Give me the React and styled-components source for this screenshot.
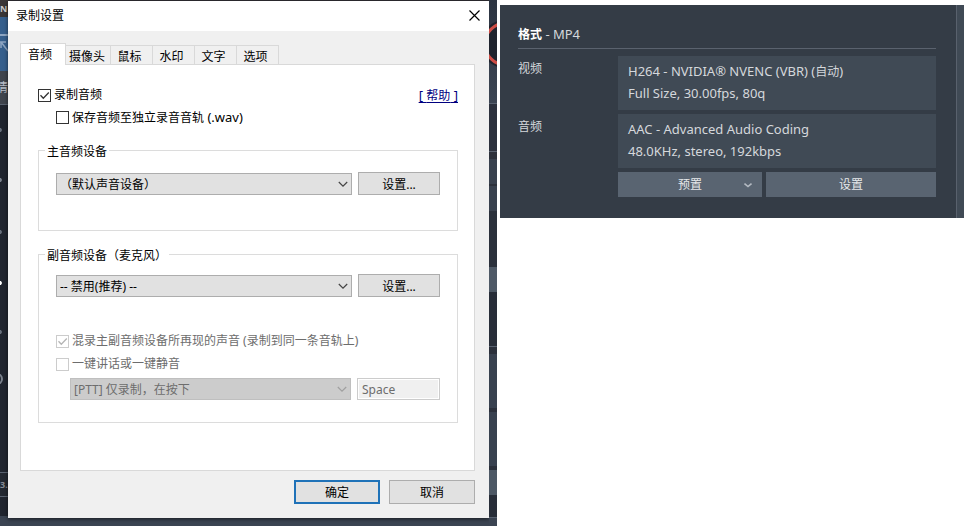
import styled, { createGlobalStyle, css } from "styled-components";

const GlobalStyle = createGlobalStyle`
  * {
    box-sizing: border-box;
  }

  body {
    margin: 0;
    background-color: #fff;
    font-family: "Noto Sans", "Noto Sans CJK SC", sans-serif;
    font-size: 12px;
    line-height: 16px;
  }

  button, input, select {
    font: inherit;
    margin: 0;
  }
`;

const Page = styled.main`
  display: grid;
  grid-template-columns: 497fr 464fr;
  column-gap: 3px;
  align-items: start;
`;

const Latin = styled.span`
  font-size: 13px;
`;

/* recorder window behind the dialog */

const Backdrop = styled.div`
  display: grid;
  grid-template-columns: 8px 1fr 8px;
  background: linear-gradient(#302d32, #3b4452 8px);
`;

const Edge = styled.div`
  display: flex;
  flex-direction: column;
  overflow: hidden;
`;

const Block = styled.div`
  display: flex;
  flex: ${({ $fill }) => ($fill ? "1" : "none")};
  align-items: center;
  justify-content: ${({ $end }) => ($end ? "flex-end" : "flex-start")};
  height: ${({ $h }) => $h}px;
  overflow: hidden;
  background: ${({ $bg }) => $bg};
  border-top: ${({ $line }) => ($line ? "1px solid #596270" : "none")};
  color: ${({ $color }) => $color || "#9aa2ae"};
`;

const EdgeMark = styled.span`
  font-size: 9px;
  font-weight: bold;
  line-height: 12px;
`;

const Dialog = styled.section`
  margin: 1px 0 8px;
  background-color: #f0f0f0;
  color: #000;
  box-shadow: 0 1px 4px rgba(0, 0, 0, 0.6);
`;

const TitleBar = styled.header`
  display: flex;
  align-items: center;
  justify-content: space-between;
  height: 30px;
  padding: 0 8px;
  background-color: #fff;
`;

const Title = styled.h1`
  margin: 0;
  font-size: 12px;
  font-weight: normal;
`;

const CloseButton = styled.button`
  display: flex;
  padding: 1px 1px 3px;
  border: none;
  background: none;
`;

const DialogBody = styled.div`
  padding: 12px 14px 14px 12px;
`;

const Tabs = styled.div`
  display: flex;
  align-items: flex-end;
  height: 21px;
`;

const Tab = styled.button`
  width: 42px;
  height: 19px;
  padding: 3px 4px 0 0;
  border: 1px solid #d9d9d9;
  border-left: none;
  border-bottom: none;
  background-color: #f0f0f0;
  color: #000;
  white-space: nowrap;

  ${({ $wide }) => $wide && css`
    width: 45px;
    padding-right: 2px;
  `}

  ${({ $active }) => $active && css`
    position: relative;
    width: 46px;
    height: 22px;
    margin-bottom: -1px;
    padding: 0 6px 0 0;
    border-left: 1px solid #d9d9d9;
    background-color: #fff;
  `}
`;

const TabPanel = styled.div`
  padding: 22px 16px 47px 17px;
  border: 1px solid #d9d9d9;
  background-color: #fff;
`;

const TopRow = styled.div`
  display: flex;
  justify-content: space-between;
  margin-bottom: 5px;
`;

const HelpLink = styled.a`
  color: #00007f;
  text-decoration: underline;
  text-decoration-skip-ink: none;
  text-underline-offset: 2px;
`;

const CheckLabel = styled.label`
  display: flex;
  align-items: center;
  gap: 3px;
  height: 16px;
  margin-left: ${({ $indent }) => ($indent ? 18 : 0)}px;
  color: ${({ $disabled }) => ($disabled ? "#6d6d6d" : "#000")};
  white-space: nowrap;
`;

const CheckFrame = styled.span`
  display: grid;
  width: 13px;
  height: 13px;

  & > * {
    grid-area: 1 / 1;
  }
`;

const CheckInput = styled.input`
  appearance: none;
  width: 13px;
  height: 13px;
  border: 1px solid #333;
  background-color: #fff;

  &:disabled {
    border-color: #ccc;
  }
`;

const Group = styled.fieldset`
  min-width: 0;
  margin: ${({ $top }) => $top}px 0 0;
  padding: ${({ $head }) => $head}px 17px ${({ $bottom }) => $bottom}px;
  border: 1px solid #dcdcdc;
`;

const Legend = styled.legend`
  height: 17px;
  margin-left: -11px;
  padding: 2px 2px 0;
`;

const FieldRow = styled.div`
  display: flex;
  align-items: flex-end;
  gap: 6px;
  margin-left: ${({ $indent }) => ($indent ? 14 : 0)}px;
`;

const SelectFrame = styled.div`
  display: grid;
  flex: 1;
  align-items: center;

  & > * {
    grid-area: 1 / 1;
  }

  & > svg {
    justify-self: end;
    margin-right: 4px;
    pointer-events: none;
  }
`;

const Select = styled.select`
  appearance: none;
  width: 100%;
  height: 22px;
  padding: 1px 20px 0 3px;
  border: 1px solid #adadad;
  border-radius: 0;
  background-color: #e1e1e1;
  color: #000;

  &:disabled {
    border-color: #bfbfbf;
    background-color: #ccc;
    color: #6d6d6d;
    opacity: 1;
  }
`;

const Button = styled.button`
  width: 82px;
  height: 23px;
  padding: 2px 0 0;
  border: 1px solid #adadad;
  background-color: #e1e1e1;
  color: #000;
`;

const FooterButton = styled(Button)`
  width: 86px;
  height: 24px;

  ${({ $primary }) => $primary && css`
    border: 2px solid #1f72b8;
  `}
`;

const KeyInput = styled.input`
  width: 83px;
  height: 22px;
  padding: 0 4px;
  border: 1px solid #ccc;
  border-radius: 0;
  background-color: #f0f0f0;
  color: #6d6d6d;
  box-shadow: inset 0 0 0 1px #fff;
`;

const Options = styled.div`
  display: grid;
  row-gap: 7px;
  margin: 36px 0 6px;
`;

const Footer = styled.footer`
  display: flex;
  justify-content: flex-end;
  gap: 9px;
  padding-top: 9px;
`;

/* format summary */

const FormatPanel = styled.section`
  margin-top: 5px;
  padding: 18px 21px 21px 18px;
  border-right: 7px solid #404a55;
  background-color: #343c46;
  box-shadow: inset -1px 0 #59616d;
  color: #d5d8dc;
`;

const FormatTitle = styled.h2`
  height: 26px;
  margin: 0 0 7px;
  padding-top: 3px;
  border-bottom: 1px solid #5a626e;
  font-size: 12px;
  font-weight: normal;

  & > strong {
    color: #fff;
  }
`;

const FormatGrid = styled.dl`
  display: grid;
  grid-template-columns: 100px 1fr;
  row-gap: 4px;
  margin: 0;
`;

const Term = styled.dt`
  padding-top: 5px;
`;

const Detail = styled.dd`
  height: 54px;
  margin: 0;
  padding: 4px 10px;
  background-color: #404a55;
  line-height: 22px;
`;

const DetailLine = styled.div`
  height: 22px;
  white-space: nowrap;
`;

const Actions = styled.div`
  display: grid;
  grid-template-columns: 144fr 170fr;
  gap: 4px;
  margin: 4px 0 0 100px;
`;

const darkControl = css`
  height: 25px;
  padding: 0;
  border: none;
  border-radius: 0;
  background-color: #596471;
  color: #e6e8ea;
`;

const DarkButton = styled.button`
  ${darkControl}
`;

const PresetSelect = styled.select`
  ${darkControl}
  appearance: none;
  width: 100%;
  text-align-last: center;
`;

const PresetFrame = styled(SelectFrame)`
  & > svg {
    margin-right: 10px;
  }
`;

const Chevron = ({ color = "#444" }) => (
  <svg width="10" height="10" viewBox="0 0 10 10" fill="none" aria-hidden="true">
    <path d="M.8 3L5 7.2 9.2 3" stroke={color} strokeWidth="1.2" />
  </svg>
);

const Checkbox = ({ label, latin, indent, disabled, checked }) => (
  <CheckLabel $indent={indent} $disabled={disabled}>
    <CheckFrame>
      <CheckInput type="checkbox" defaultChecked={checked} disabled={disabled} />
      {checked && (
        <svg width="13" height="13" viewBox="0 0 13 13" fill="none" pointerEvents="none">
          <path d="M2.5 6.2l2.8 3L10.8 3.5" stroke={disabled ? "#b5b5b5" : "#333"} strokeWidth="1.3" />
        </svg>
      )}
    </CheckFrame>
    <span>{label}{latin && <Latin> {latin}</Latin>}</span>
  </CheckLabel>
);

const DropDown = ({ label, value, disabled }) => (
  <SelectFrame>
    <Select aria-label={label} disabled={disabled}>
      <option>{value}</option>
    </Select>
    <Chevron color={disabled ? "#a0a0a0" : "#444"} />
  </SelectFrame>
);

const SideIcon = ({ ring }) => (
  <svg width="8" height="10" viewBox="0 0 8 10" fill="none">
    {ring ? (
      <path d="M-3 0a5 5 0 0 1 0 10" stroke="#7b828d" strokeWidth="2" />
    ) : (
      <path d="M0 5h2M0.5 3v4" stroke="currentColor" strokeWidth="1.5" />
    )}
  </svg>
);

const LeftEdge = () => (
  <Edge aria-hidden="true">
    <Block $h={17} $bg="#3a3637" $color="#c9c9c9"><EdgeMark>N</EdgeMark></Block>
    <Block $h={54} $bg="#365f8d">
      <svg width="8" height="54" viewBox="0 0 8 54" fill="none" stroke="#8da5c2">
        <path d="M0 18h8" strokeWidth="2" />
        <path d="M0 25h6M1 25l7 9M1 25v6" strokeWidth="1.5" />
      </svg>
    </Block>
    <Block $h={33} $bg="#3f444d" $color="#b9bec7" $end>情</Block>
    <Block $h={50} $bg="#20252f" $color="#68707c" $line><SideIcon /></Block>
    <Block $h={51} $bg="#20252f" $color="#7b828d"><SideIcon /></Block>
    <Block $h={54} $bg="#20252f" $color="#68707c"><SideIcon /></Block>
    <Block $h={48} $bg="#20252f" $color="#fff"><SideIcon /></Block>
    <Block $h={50} $bg="#20252f" $color="#68707c"><SideIcon /></Block>
    <Block $h={44} $bg="#20252f"><SideIcon ring /></Block>
    <Block $h={71} $bg="#20252f" />
    <Block $h={24} $bg="#232831" $color="#868c96" $line><EdgeMark>3.</EdgeMark></Block>
    <Block $h={20} $bg="#20252f" $line />
    <Block $bg="#3b4452" $fill />
  </Edge>
);

const RightEdge = () => (
  <Edge aria-hidden="true">
    <Block $h={103} $bg="linear-gradient(#2c3441, #3c4553)">
      <svg width="8" height="103" viewBox="0 0 8 103">
        <circle cx="16" cy="44" r="24" fill="#20242e" />
        <circle cx="17" cy="44" r="21" fill="#1f242e" stroke="#ce4d46" strokeWidth="3" />
      </svg>
    </Block>
    <Block $h={48} $bg="#2c313d" $line />
    <Block $h={8} $bg="#2d313b" $line />
    <Block $h={25} $bg="#39414e" />
    <Block $h={2} $bg="#2d313b" />
    <Block $h={25} $bg="#39414e" />
    <Block $h={56} $bg="#2a303b" />
    <Block $h={25} $bg="#4e5966" />
    <Block $h={54} $bg="#282e39" />
    <Block $h={8} $bg="#2b303b" $line />
    <Block $h={54} $bg="#38414f" />
    <Block $h={4} $bg="#2b303b" />
    <Block $h={54} $bg="#38414f" />
    <Block $h={4} $bg="#2b303b" />
    <Block $h={25} $bg="#4d5865" />
    <Block $h={22} $bg="#282e39" />
    <Block $bg="#3b4452" $line $fill />
  </Edge>
);

const SettingsDialog = () => (
  <Dialog role="dialog" aria-labelledby="dialog-title">
    <TitleBar>
      <Title id="dialog-title">录制设置</Title>
      <CloseButton aria-label="关闭">
        <svg width="11" height="11" viewBox="0 0 11 11" stroke="#000" strokeWidth="1.2">
          <path d="M.5.5l10 10M10.5.5l-10 10" />
        </svg>
      </CloseButton>
    </TitleBar>
    <DialogBody>
      <Tabs role="tablist">
        <Tab role="tab" aria-selected="true" $active>音频</Tab>
        <Tab role="tab" $wide>摄像头</Tab>
        <Tab role="tab">鼠标</Tab>
        <Tab role="tab">水印</Tab>
        <Tab role="tab">文字</Tab>
        <Tab role="tab">选项</Tab>
      </Tabs>
      <TabPanel role="tabpanel">
        <TopRow>
          <Checkbox label="录制音频" checked />
          <HelpLink href="#help"><Latin>[ </Latin>帮助<Latin> ]</Latin></HelpLink>
        </TopRow>
        <Checkbox label="保存音频至独立录音音轨" latin="(.wav)" indent />
        <Group $top={17} $head={13} $bottom={35}>
          <Legend>主音频设备</Legend>
          <FieldRow>
            <DropDown label="主音频设备" value="（默认声音设备）" />
            <Button>设置...</Button>
          </FieldRow>
        </Group>
        <Group $top={15} $head={11} $bottom={22}>
          <Legend>副音频设备（麦克风）</Legend>
          <FieldRow>
            <DropDown label="副音频设备" value="-- 禁用(推荐) --" />
            <Button>设置...</Button>
          </FieldRow>
          <Options>
            <Checkbox label="混录主副音频设备所再现的声音 (录制到同一条音轨上)" disabled checked />
            <Checkbox label="一键讲话或一键静音" disabled />
          </Options>
          <FieldRow $indent>
            <DropDown label="一键讲话模式" value="[PTT] 仅录制，在按下" disabled />
            <KeyInput aria-label="快捷键" defaultValue="Space" disabled />
          </FieldRow>
        </Group>
      </TabPanel>
      <Footer>
        <FooterButton $primary>确定</FooterButton>
        <FooterButton>取消</FooterButton>
      </Footer>
    </DialogBody>
  </Dialog>
);

const FormatSummary = () => (
  <FormatPanel>
    <FormatTitle><strong>格式</strong><Latin> - MP4</Latin></FormatTitle>
    <FormatGrid>
      <Term>视频</Term>
      <Detail>
        <DetailLine><Latin>H264 - NVIDIA® NVENC (VBR) (</Latin>自动<Latin>)</Latin></DetailLine>
        <DetailLine><Latin>Full Size, 30.00fps, 80q</Latin></DetailLine>
      </Detail>
      <Term>音频</Term>
      <Detail>
        <DetailLine><Latin>AAC - Advanced Audio Coding</Latin></DetailLine>
        <DetailLine><Latin>48.0KHz, stereo, 192kbps</Latin></DetailLine>
      </Detail>
    </FormatGrid>
    <Actions>
      <PresetFrame>
        <PresetSelect aria-label="预置">
          <option>预置</option>
        </PresetSelect>
        <svg width="8" height="8" viewBox="0 0 8 8" fill="none" aria-hidden="true">
          <path d="M.5 2.5L4 5.5l3.5-3" stroke="#b4bac2" strokeWidth="1.6" />
        </svg>
      </PresetFrame>
      <DarkButton>设置</DarkButton>
    </Actions>
  </FormatPanel>
);

const App = () => {
  return (
    <>
      <GlobalStyle />
      <Page>
        <Backdrop>
          <LeftEdge />
          <SettingsDialog />
          <RightEdge />
        </Backdrop>
        <FormatSummary />
      </Page>
    </>
  );
};

export default App;
